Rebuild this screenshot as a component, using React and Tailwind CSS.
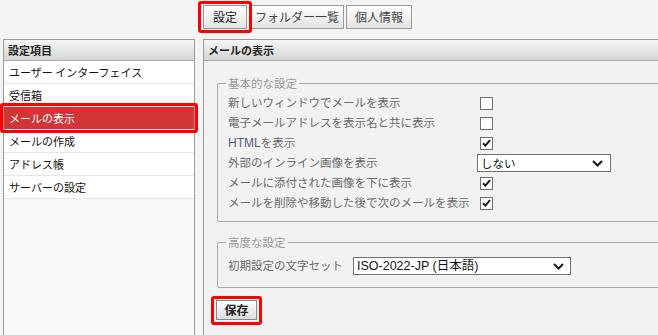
import React from "react";

function Check({ checked }) {
  return (
    <span className="w-[13px] h-[13px] border border-[#707070] bg-white flex items-center justify-center shrink-0">
      {checked && (
        <svg width="9" height="8" viewBox="0 0 9 8">
          <path d="M1 4.2 L3.4 6.6 L8 1.2" stroke="#1a1a1a" strokeWidth="2" fill="none" />
        </svg>
      )}
    </span>
  );
}

function Chevron() {
  return (
    <svg width="11" height="7" viewBox="0 0 11 7" className="shrink-0">
      <path d="M1 1 L5.5 5.5 L10 1" stroke="#1a1a1a" strokeWidth="2" fill="none" />
    </svg>
  );
}

function Row({ children }) {
  return <div className="h-[20px] flex items-center">{children}</div>;
}

export default function App() {
  const items = ["ユーザー インターフェイス", "受信箱", "メールの表示", "メールの作成", "アドレス帳", "サーバーの設定"];
  return (
    <div className="w-[658px] h-[335px] overflow-hidden bg-[#f4f4f4] font-['Noto_Sans_CJK_JP','Noto_Sans',sans-serif] text-[#222]">
      {/* tabs */}
      <div className="h-[39px] pl-[203px] pt-[5px] flex gap-[2px] items-start">
        <div className="relative h-[24px] px-[9px] border border-[#9a9a9a] bg-gradient-to-b from-white to-[#e4e4e4] text-[12px] leading-[22px] text-[#222]">
          設定
          <div className="absolute -left-[6px] -right-[6px] -top-[5px] -bottom-[5px] border-[3px] border-[#ff0000] rounded-[3px]" />
        </div>
        <div className="ml-[1px] h-[24px] px-[4px] border border-[#9a9a9a] bg-gradient-to-b from-white to-[#e4e4e4] text-[12px] leading-[22px] text-[#444]">
          フォルダー一覧
        </div>
        <div className="h-[24px] px-[8px] border border-[#9a9a9a] bg-gradient-to-b from-white to-[#e4e4e4] text-[12px] leading-[22px] text-[#444]">
          個人情報
        </div>
      </div>

      <div className="flex h-[296px]">
        {/* left panel */}
        <div className="ml-[3px] w-[192px] shrink-0 border border-b-0 border-[#999] bg-[#f8f8f8] flex flex-col">
          <div className="h-[21px] border-b border-[#aaa] bg-gradient-to-b from-[#f7f7f7] to-[#d5d5d5] px-[4px] text-[11px] leading-[20px] font-bold text-[#222]">
            設定項目
          </div>
          {items.map((t, i) =>
            i === 2 ? (
              <div key={t} className="relative h-[23px] border-b border-[#e6e6e6] bg-[#d13535] px-[5px] text-[11px] leading-[22px] text-white">
                {t}
                <div className="absolute -left-[4px] -right-[4px] -top-[4px] -bottom-[4px] border-[3px] border-[#ff0000] rounded-[3px]" />
              </div>
            ) : (
              <div key={t} className="h-[23px] border-b border-[#e6e6e6] bg-white px-[5px] text-[11px] leading-[22px] text-[#111]">
                {t}
              </div>
            )
          )}
        </div>

        {/* right panel */}
        <div className="ml-[8px] w-[470px] shrink-0 border border-b-0 border-[#999] bg-[#f2f2f2] flex flex-col">
          <div className="h-[21px] border-b border-[#aaa] bg-gradient-to-b from-[#f7f7f7] to-[#d5d5d5] px-[4px] text-[11px] leading-[20px] font-bold text-[#222]">
            メールの表示
          </div>
          <div className="pl-[13px] pt-[14px]">
            <fieldset className="w-[460px] border border-[#aaa] rounded-[2px] pl-[10px] pb-[8px] text-[11.5px] text-[#6a6a6a]">
              <legend className="px-[2px] -ml-[2px] leading-[16px] text-[#999]">基本的な設定</legend>
              <div className="mt-[2px]">
                <Row>
                  <span className="w-[252px]">新しいウィンドウでメールを表示</span>
                  <Check />
                </Row>
                <Row>
                  <span className="w-[252px]">電子メールアドレスを表示名と共に表示</span>
                  <Check />
                </Row>
                <Row>
                  <span className="w-[252px]"><span className="text-[#4e5d78] font-['Liberation_Sans',sans-serif] text-[12px]">HTML</span>を表示</span>
                  <Check checked />
                </Row>
                <Row>
                  <span className="w-[249px]">外部のインライン画像を表示</span>
                  <div className="w-[134px] h-[18px] border border-[#707070] bg-white flex items-center justify-between pl-[3px] pr-[7px] text-[#111]">
                    <span className="leading-[16px]">しない</span>
                    <Chevron />
                  </div>
                </Row>
                <Row>
                  <span className="w-[252px]">メールに添付された画像を下に表示</span>
                  <Check checked />
                </Row>
                <Row>
                  <span className="w-[252px]">メールを削除や移動した後で次のメールを表示</span>
                  <Check checked />
                </Row>
              </div>
            </fieldset>

            <fieldset className="mt-[12px] w-[460px] border border-[#aaa] rounded-[2px] pl-[10px] pb-[10px] text-[11.5px] text-[#6a6a6a]">
              <legend className="px-[2px] -ml-[2px] leading-[16px] text-[#999]">高度な設定</legend>
              <div className="mt-[5px] h-[22px] flex items-center">
                <span className="w-[125px]">初期設定の文字セット</span>
                <div className="w-[218px] h-[18px] border border-[#707070] bg-white flex items-center justify-between pl-[3px] pr-[6px] text-[#111]">
                  <span className="leading-[16px] text-[12.5px] font-['Liberation_Sans','Noto_Sans_CJK_JP',sans-serif]">ISO-2022-JP (日本語)</span>
                  <Chevron />
                </div>
              </div>
            </fieldset>

            <div className="mt-[12px] -ml-[1px] relative w-[41px] h-[20px] border border-[#888] bg-gradient-to-b from-white to-[#dcdcdc] flex items-center justify-center text-[12px] font-bold text-[#222]">
              保存
              <div className="absolute -left-[6px] -right-[6px] -top-[5px] -bottom-[6px] border-[3px] border-[#ff0000] rounded-[3px]" />
            </div>
          </div>
        </div>
      </div>
    </div>
  );
}
